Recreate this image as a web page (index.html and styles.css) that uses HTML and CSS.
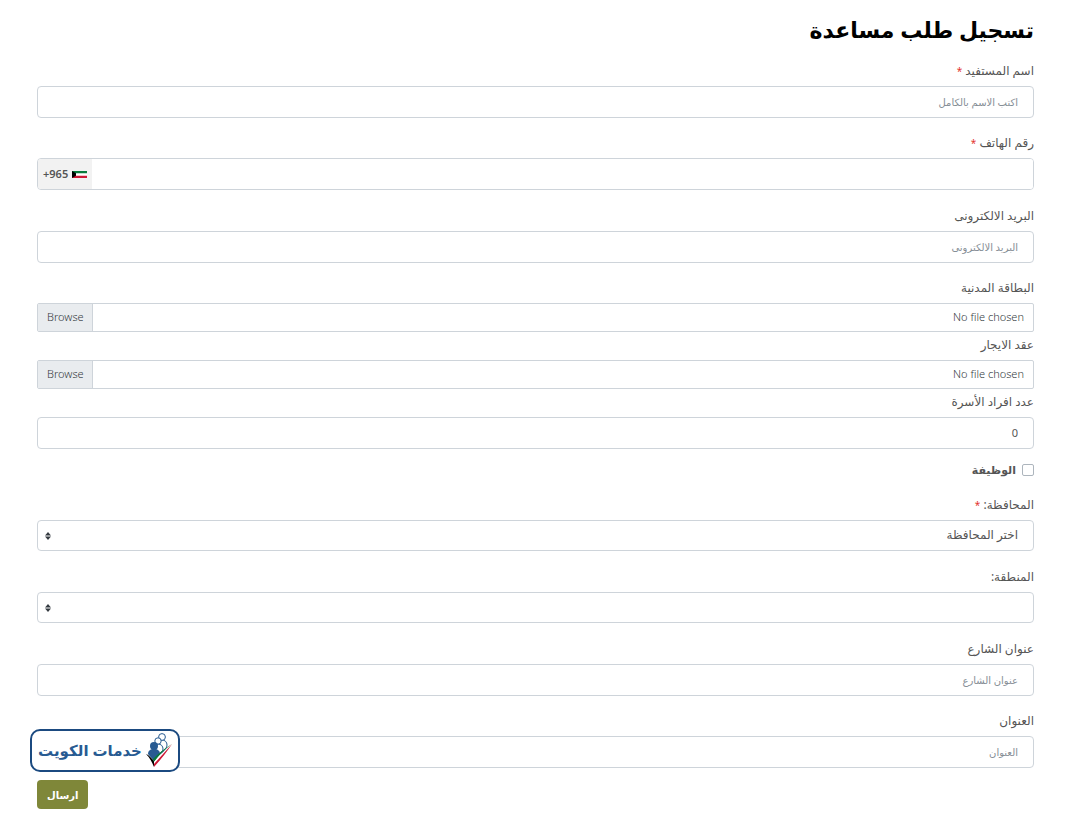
FILE: index.html
```html
<!DOCTYPE html>
<html lang="ar" dir="rtl">
<head>
<meta charset="utf-8">
<meta name="viewport" content="width=device-width, initial-scale=1">
<title>تسجيل طلب مساعدة</title>
<link rel="stylesheet" href="styles.css">
</head>
<body>
<main class="page">
  <h1 class="title">تسجيل طلب مساعدة</h1>
  <form class="form">
    <div class="group">
      <label class="label" for="name">اسم المستفيد <span class="required">*</span></label>
      <input class="control" id="name" type="text" placeholder="اكتب الاسم بالكامل">
    </div>
    <div class="group group-roomy">
      <label class="label" for="phone">رقم الهاتف <span class="required">*</span></label>
      <div class="phone">
        <input class="phone-input" id="phone" type="tel">
        <span class="dial">
          <svg class="flag" viewBox="0 0 15 7" preserveAspectRatio="none" aria-hidden="true">
            <path fill="#fff" d="M0 0h15v7H0z"/>
            <path fill="#087a3c" d="M0 0h15v2.3H0z"/>
            <path fill="#ce1836" d="M0 4.7h15V7H0z"/>
            <path fill="#000" d="M0 0l4 2.3v2.4L0 7z"/>
          </svg>
          <bdi dir="ltr">+965</bdi>
        </span>
      </div>
    </div>
    <div class="group">
      <label class="label" for="email">البريد الالكترونى</label>
      <input class="control" id="email" type="email" placeholder="البريد الالكترونى">
    </div>
    <div class="group group-tight">
      <label class="label" for="civil">البطاقة المدنية</label>
      <div class="file">
        <span class="file-name">No file chosen</span>
        <span class="file-button">Browse</span>
        <input class="file-input" id="civil" type="file">
      </div>
    </div>
    <div class="group group-tight">
      <label class="label" for="lease">عقد الايجار</label>
      <div class="file">
        <span class="file-name">No file chosen</span>
        <span class="file-button">Browse</span>
        <input class="file-input" id="lease" type="file">
      </div>
    </div>
    <div class="group group-near">
      <label class="label" for="family">عدد افراد الأسرة</label>
      <input class="control" id="family" type="text" inputmode="numeric" value="0">
    </div>
    <div class="check">
      <input class="check-box" id="job" type="checkbox">
      <label class="check-label" for="job">الوظيفة</label>
    </div>
    <div class="group group-roomy">
      <label class="label" for="governorate">المحافظة: <span class="required">*</span></label>
      <div class="select-wrap">
        <select class="select" id="governorate"><option>اختر المحافظة</option></select>
        <svg class="arrows" viewBox="0 0 6 8" aria-hidden="true"><path d="M0 3.500l3-3.500 3 3.500zM0 4.500h6L3 8z"/></svg>
      </div>
    </div>
    <div class="group group-roomy">
      <label class="label" for="area">المنطقة:</label>
      <div class="select-wrap">
        <select class="select" id="area"><option></option></select>
        <svg class="arrows" viewBox="0 0 6 8" aria-hidden="true"><path d="M0 3.500l3-3.500 3 3.500zM0 4.500h6L3 8z"/></svg>
      </div>
    </div>
    <div class="group">
      <label class="label" for="street">عنوان الشارع</label>
      <input class="control" id="street" type="text" placeholder="عنوان الشارع">
    </div>
    <div class="group group-near">
      <label class="label" for="address">العنوان</label>
      <input class="control" id="address" type="text" placeholder="العنوان">
    </div>
    <button class="submit" type="submit">ارسال</button>
  </form>
</main>
<a class="badge" href="#">
  <svg class="badge-logo" viewBox="0 0 28 36" aria-hidden="true">
    <g fill="#fff" stroke="#285b92" stroke-width="1">
      <path d="M13 24V12c0-3 2-4 5-4s5 2 5 5c0 3-2 4-4 7z"/>
      <circle cx="18" cy="5" r="3.400"/>
      <path d="M10 26V16c0-3 2-4 4-4 3 0 5 2 5 5 0 2-2 3-4 6z"/>
      <circle cx="14" cy="9" r="3.200"/>
    </g>
    <circle cx="10" cy="14" r="4" fill="#285b92"/>
    <path fill="#285b92" d="M4 22c0-3 2-5 6-5s6 2 6 5l-6 7z"/>
    <path fill="#000" d="M2 22c3 1 5 4 8 7v6c-2-5-4-9-8-13z"/>
    <path fill="#087a3c" d="M9 27C15 21 21 16 28 12c-7 5-13 11-18 18z"/>
    <path fill="#fff" d="M10 30C16 23 22 17 28 12c-6 7-12 13-18 20z"/>
    <path fill="#ce1836" d="M10 32C16 25 22 19 28 12c-5 8-11 15-18 23z"/>
  </svg>
  <span>خدمات الكويت</span>
</a>
</body>
</html>
```
FILE: styles.css
```css
* { box-sizing: border-box; }

body {
  margin: 0;
  background: #fff;
  color: #555;
  font-family: "Noto Sans", "DejaVu Sans", sans-serif;
  font-size: 11px;
  line-height: 18px;
}

input, select, button { font: inherit; color: inherit; }

.page { padding: 12px 50px 16px 37px; }

.title {
  margin: 0 0 16px;
  color: #000;
  font-size: 22px;
  line-height: 34px;
  font-weight: 700;
}

.form { display: flex; flex-direction: column; align-items: stretch; }

.group { display: flex; flex-direction: column; gap: 6px; margin-bottom: 16px; }
.group-roomy { margin-bottom: 17px; }
.group-near { margin-bottom: 12px; }
.group-tight { margin-bottom: 4px; }

.label { display: block; font-size: 12px; }
.required { color: #e3342f; font-size: 10px; }

.control {
  width: 100%;
  height: 32px;
  padding: 0 15px 2px;
  border: 1px solid #ced4da;
  border-radius: 4px;
  background: #fff;
}
.control::placeholder { color: #868e96; font-size: 10px; opacity: 1; }

.phone {
  display: flex;
  height: 32px;
  border: 1px solid #ced4da;
  border-radius: 4px;
  overflow: hidden;
}
.phone-input { flex: 1; min-width: 0; padding: 0 15px; border: 0; background: #fff; }
.dial {
  display: flex;
  align-items: center;
  gap: 4px;
  padding: 0 5px;
  background: #f2f2f2;
  font-weight: 600;
}
.flag { width: 15px; height: 7px; }

.file {
  position: relative;
  display: flex;
  height: 29px;
  border: 1px solid #ced4da;
  border-radius: 2px;
  line-height: 26px;
}
.file-name { flex: 1; padding: 0 9px; }
.file-button {
  padding: 0 8px 0 9px;
  border-right: 1px solid #ced4da;
  background: #e9ecef;
}
.file-name, .file-button { color: #343a40; font-weight: 300; }
.file-input { position: absolute; inset: 0; width: 100%; height: 100%; opacity: 0; cursor: pointer; }

.check { display: flex; align-items: center; gap: 6px; margin-bottom: 17px; }
.check-box {
  appearance: none;
  width: 12px;
  height: 12px;
  margin: 0;
  border: 1px solid #adb5bd;
  border-radius: 2px;
  background: #fff;
}
.check-box:checked { background: #7f8739; }
.check-label { font-weight: 700; }

.select-wrap { position: relative; display: flex; }
.select {
  appearance: none;
  width: 100%;
  height: 31px;
  padding: 0 15px 2px;
  border: 1px solid #ced4da;
  border-radius: 4px;
  background: #fff;
  font-size: 12px;
}
.arrows { position: absolute; left: 8px; top: 12px; width: 6px; height: 8px; fill: #343a40; pointer-events: none; }

.submit {
  align-self: flex-end;
  height: 29px;
  padding: 0 10px;
  border: 0;
  border-radius: 4px;
  background: #7f8739;
  color: #fff;
  font-size: 10px;
  font-weight: 700;
}

.badge {
  position: fixed;
  left: 30px;
  bottom: 53px;
  display: flex;
  align-items: center;
  justify-content: center;
  gap: 2px;
  width: 150px;
  height: 43px;
  padding-bottom: 2px;
  border: 2px solid #1b4a80;
  border-radius: 10px;
  background: #fff;
  color: #285b92;
  font-size: 15px;
  font-weight: 700;
  line-height: 30px;
  text-decoration: none;
  white-space: nowrap;
}
.badge-logo { flex: none; width: 28px; height: 36px; }
```
